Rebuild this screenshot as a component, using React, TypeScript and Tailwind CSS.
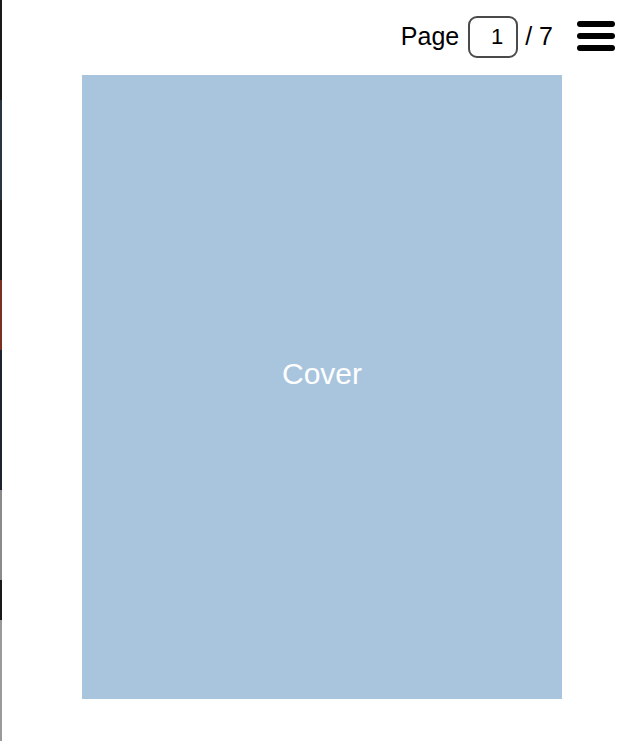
export default function App() {
  return (
    <div
      className="relative h-[741px] w-[638px] overflow-hidden bg-white"
      style={{ fontFamily: '"Liberation Sans", Arial, sans-serif' }}
    >
      {/* dark edge of the window behind */}
      <div className="absolute left-0 top-0 flex h-full w-[2px] flex-col">
        <div className="h-[100px] bg-[#1a1a1a]" />
        <div className="h-[100px] bg-[#2a3440]" />
        <div className="h-[80px] bg-[#1c1c1c]" />
        <div className="h-[70px] bg-[#7a3020]" />
        <div className="h-[140px] bg-[#1c2230]" />
        <div className="h-[90px] bg-[#8a8a8a]" />
        <div className="h-[40px] bg-[#181818]" />
        <div className="flex-1 bg-[#9a9a9a]" />
      </div>

      <header className="flex h-[75px] items-center justify-end pr-[23px] pb-[2px]">
        <span className="text-[25px] text-black">Page</span>
        <div className="ml-[9px] flex h-[42px] w-[50px] items-center justify-end rounded-[9px] border-2 border-[#4a4a4a] pr-[13px] text-[22px] text-black">
          1
        </div>
        <span className="ml-[7px] text-[25px] text-black">/ 7</span>
        <div className="ml-[24px] flex w-[38px] flex-col gap-[6px] pb-[2px]">
          <div className="h-[6px] rounded-full bg-black" />
          <div className="h-[6px] rounded-full bg-black" />
          <div className="h-[6px] rounded-full bg-black" />
        </div>
      </header>

      <div className="ml-[82px] flex h-[624px] w-[480px] items-center justify-center bg-[#a8c5dd] pb-[28px]">
        <span className="text-[30px] text-white">Cover</span>
      </div>
    </div>
  );
}
